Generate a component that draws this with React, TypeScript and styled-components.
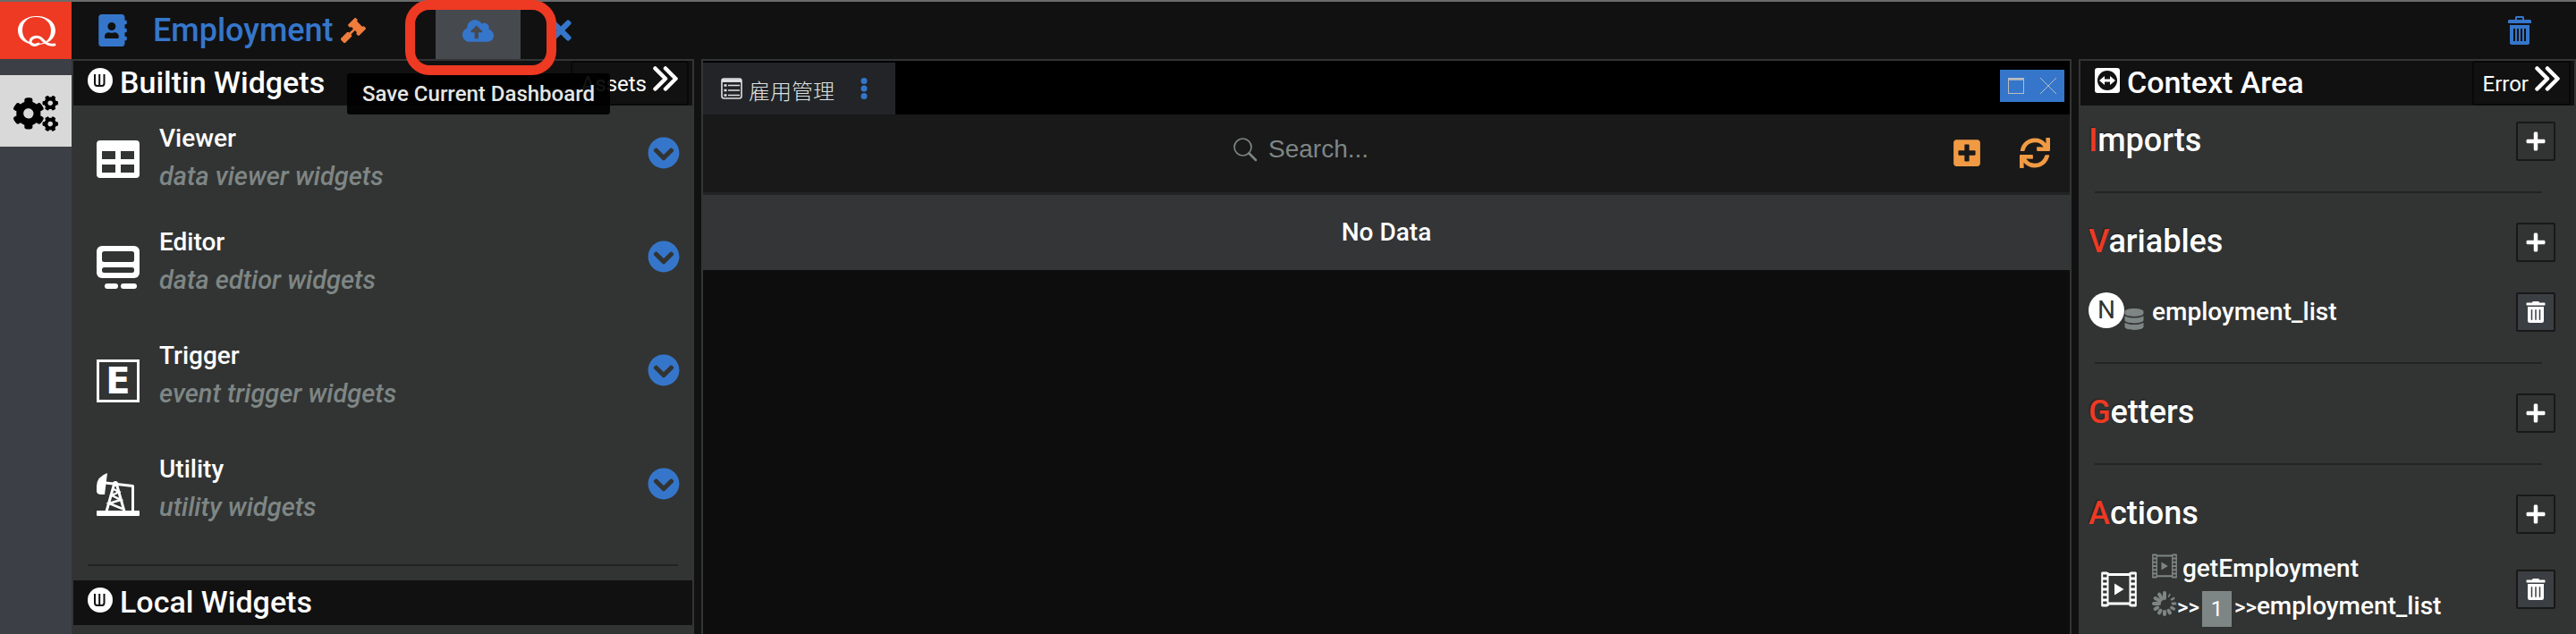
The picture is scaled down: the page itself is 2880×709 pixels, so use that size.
import React from "react";
import styled, { createGlobalStyle } from "styled-components";
import {
  FaAddressBook,
  FaChevronCircleDown,
  FaCloudUploadAlt,
  FaCogs,
  FaDatabase,
  FaGavel,
  FaPlus,
  FaPlusSquare,
  FaSync,
  FaTimes,
  FaTrashAlt,
} from "react-icons/fa";
import { ImBin } from "react-icons/im";

const color = {
  bar: "#111111",
  panel: "#323433",
  edge: "#333534",
  rail: "#3c3f45",
  blue: "#3576cb",
  red: "#ee3923",
  orange: "#f09a44",
  amber: "#f07c3c",
  muted: "#7e8685",
  white: "#ffffff",
};

const GlobalStyle = createGlobalStyle`
  *, *::before, *::after { box-sizing: border-box; }
  body {
    margin: 0;
    overflow: hidden;
    background: ${color.bar};
    color: ${color.white};
    font-family: Roboto, "Noto Sans CJK SC", sans-serif;
    font-size: 28px;
    font-weight: 500;
  }
  button {
    margin: 0;
    padding: 0;
    border: 0;
    background: none;
    color: inherit;
    font: inherit;
    cursor: pointer;
  }
  svg { display: block; flex: none; }
  h1, h2, h3, p, ul { margin: 0; padding: 0; font: inherit; list-style: none; }
`;

/* ---------- frame ---------- */

const Page = styled.div`
  display: flex;
  height: 100vh;
  border-top: 2px solid #6a6b6b;
`;

const Rail = styled.nav`
  display: flex;
  flex: none;
  flex-direction: column;
  width: 80px;
  background: ${color.rail};
`;

const LogoLink = styled.a`
  display: block;
  height: 64px;
  margin-bottom: 18px;
  background: ${color.red};
`;

const RailButton = styled.button`
  display: flex;
  align-items: center;
  justify-content: center;
  height: 80px;
  padding-top: 5px;
  background: #d9d9d9;
  color: #000;
`;

const Main = styled.div`
  display: flex;
  flex: 1;
  flex-direction: column;
  min-width: 0;
`;

const TopBar = styled.header`
  position: relative;
  z-index: 2;
  display: flex;
  flex: none;
  align-items: center;
  height: 64px;
  padding: 0 46px 0 28px;
  background: ${color.bar};
  color: ${color.blue};
`;

const PageTitle = styled.h1`
  margin: 0 8px 0 27px;
  font-size: 36px;
  font-weight: 500;
  line-height: 64px;
`;

const Gavel = styled(FaGavel)`
  color: ${color.amber};
`;

const SaveSlot = styled.div`
  position: relative;
  display: flex;
  align-self: stretch;
  margin-right: 28px;
`;

const TitleGroup = styled.div`
  display: flex;
  align-items: center;
  width: 379px;
`;

const SaveButton = styled.button`
  display: flex;
  align-items: center;
  justify-content: center;
  width: 95px;
  background: #46494e;
  color: ${color.blue};
`;

const Highlight = styled.div`
  position: absolute;
  top: -2px;
  left: -34px;
  z-index: 2;
  width: 169px;
  height: 84px;
  border: 11px solid ${color.red};
  border-radius: 27px;
  pointer-events: none;
`;

const Tooltip = styled.div`
  position: absolute;
  top: 80px;
  left: -99px;
  padding: 0 17px;
  border-radius: 3px;
  background: rgba(0, 0, 0, 0.92);
  color: #e4e6e6;
  font-size: 24px;
  line-height: 46px;
  white-space: nowrap;
`;

const Spacer = styled.div`
  flex: 1;
`;

const Columns = styled.div`
  display: grid;
  flex: 1;
  grid-template-columns: minmax(0, 696fr) minmax(0, 1532fr) minmax(0, 556fr);
  gap: 8px;
  min-height: 0;
`;

const Panel = styled.section<{ $tone?: string }>`
  overflow: hidden;
  border: 2px solid ${color.edge};
  border-bottom: 0;
  background: ${(p) => p.$tone ?? color.panel};
`;

const PanelHead = styled.header`
  display: flex;
  align-items: baseline;
  gap: 8px;
  height: 50px;
  padding-left: 16px;
  background: ${color.bar};
  font-size: 34px;
  line-height: 48px;
`;

const SwitchButton = styled.button`
  display: flex;
  align-items: baseline;
  align-self: flex-start;
  gap: 7px;
  margin: 0 4px 0 auto;
  padding: 2px 10px 0;
  border: 2px solid #080808;
  border-radius: 3px;
  font-size: 24px;
  font-weight: 400;
  line-height: 44px;
`;

const Rule = styled.hr`
  height: 2px;
  margin: 16px;
  border: 0;
  background: #222423;
`;

/* ---------- widget list ---------- */

const WidgetRow = styled.li<{ $height: number }>`
  display: flex;
  align-items: flex-start;
  height: ${(p) => p.$height}px;
  padding: 15px 14px 0 26px;

  & > svg { margin-top: 26px; }
`;

const WidgetText = styled.div`
  flex: 1;
  padding: 1px 0 0 22px;
  line-height: 42px;
`;

const Hint = styled.p`
  color: ${color.muted};
  font-size: 29px;
  font-style: italic;
`;

const ExpandButton = styled.button`
  margin-top: 20px;
  color: ${color.blue};
`;

/* ---------- centre ---------- */

const TabBar = styled.div`
  display: flex;
  align-items: flex-start;
  height: 60px;
  background: #000;
`;

const Tab = styled.div`
  display: flex;
  align-items: center;
  height: 58px;
  margin: 2px auto 0 0;
  padding: 0 31px 0 20px;
  background: #222427;
  color: #dfe2e2;
  font-size: 24px;
  font-weight: 300;
`;

const TabLabel = styled.span`
  margin: 0 29px 0 7px;
  padding-top: 8px;
  line-height: 50px;
`;

const WindowButtons = styled.div`
  display: flex;
  margin: 10px 6px 0 0;
  background: ${color.blue};
  color: #b9bcbd;
`;

const WindowButton = styled.button`
  display: flex;
  align-items: center;
  justify-content: center;
  width: 36px;
  height: 36px;
`;

const Toolbar = styled.div`
  display: grid;
  grid-template-columns: 1fr 360px 1fr;
  height: 90px;
  border-bottom: 3px solid #222423;
  background: #191919;
`;

const SearchBox = styled.label`
  display: flex;
  grid-column: 2;
  align-items: center;
  height: 78px;
  padding-left: 9px;
  color: ${color.muted};
`;

const SearchInput = styled.input`
  flex: 1;
  min-width: 0;
  height: 40px;
  margin-left: 12px;
  padding: 0;
  border: 0;
  outline: 0;
  background: none;
  color: ${color.white};
  font: 400 28px "Liberation Sans", Arial, sans-serif;

  &::placeholder { color: ${color.muted}; opacity: 1; }
`;

const ToolbarActions = styled.div`
  display: flex;
  align-items: center;
  justify-content: flex-end;
  gap: 42px;
  height: 86px;
  padding-right: 22px;
  color: ${color.orange};
`;

const EmptyRow = styled.p`
  background: #333536;
  line-height: 84px;
  text-align: center;
`;

/* ---------- context area ---------- */

const Context = styled.div`
  padding: 18px 21px 0 9px;
`;

const Group = styled.section`
  display: flex;
  flex-direction: column;
  gap: 18px;

  & + & {
    margin-top: 34px;
    padding-top: 35px;
    background: linear-gradient(#222423, #222423) 7px 0 / calc(100% - 22px) 2px no-repeat;
  }
`;

const GroupHead = styled.div`
  display: flex;
  align-items: flex-start;
  justify-content: space-between;
`;

const GroupTitle = styled.h3`
  font-size: 36px;
  font-weight: 500;
  line-height: 42px;
  text-shadow: -1px -1px 1px #222423;

  &::first-letter { color: ${color.red}; }
`;

const SquareButton = styled.button<{ $filled?: boolean }>`
  display: flex;
  flex: none;
  align-items: center;
  justify-content: center;
  width: 44px;
  height: 44px;
  border: 2px solid #171817;
  border-radius: 2px;
  background: ${(p) => (p.$filled ? "#3b3e43" : "transparent")};
`;

const VariableRow = styled.div`
  display: flex;
  margin-top: 16px;
`;

const TypeBadge = styled.span`
  flex: none;
  width: 40px;
  height: 40px;
  border-radius: 50%;
  background: ${color.white};
  color: ${color.panel};
  font-weight: 400;
  line-height: 40px;
  text-align: center;
`;

const StoreIcon = styled(FaDatabase)`
  margin: 18px 0 0 -1px;
  color: ${color.muted};
`;

const RowName = styled.span`
  flex: 1;
  padding-left: 8px;
  line-height: 44px;
`;

const ActionRow = styled.div`
  display: flex;
  align-items: flex-start;
  padding-left: 14px;

  & > svg { margin-top: 24px; }
  & > button { margin-top: 22px; }
`;

const ActionLines = styled.div`
  flex: 1;
  padding-left: 17px;
`;

const ActionLine = styled.div<{ $gap?: number }>`
  display: flex;
  align-items: flex-start;
  min-height: 42px;
  line-height: 42px;

  & > svg {
    margin: 4px ${(p) => p.$gap ?? 0}px 0 0;
    color: ${color.muted};
  }
`;

const Arrows = styled.span`
  font-size: 24px;
  line-height: 44px;
`;

const Count = styled.span`
  width: 33px;
  height: 40px;
  margin: 4px 3px;
  background: ${color.muted};
  font-size: 24px;
  font-weight: 400;
  line-height: 40px;
  text-align: center;
`;

const IconFrame = styled.span`
  display: block;
  flex: none;
  width: 48px;
  height: 48px;
  margin-top: 26px;
  border: 3px solid ${color.white};
  font: 700 40px/43px "DejaVu Sans", sans-serif;
  text-align: center;
`;

/* ---------- drawings ---------- */

const Logo = () => (
  <svg width="80" height="64" viewBox="0 2 80 64" fill="none">
    <path
      fill="#fff"
      fillRule="evenodd"
      d="M41 18C52 18 62 24 62 34C62 43 54 50 41 50C29 50 20 44 20 34C20 24 30 18 41 18ZM40 19C31 19 25 25 25 34C25 43 32 49 42 49C51 49 57 43 57 34C57 25 50 19 40 19Z"
    />
    <path
      d="M43 49C38 52 34 50 34 46C35 41 42 40 46 43C50 47 53 51 61 50"
      stroke="#fff"
      strokeWidth="3"
      strokeLinecap="round"
    />
  </svg>
);

const WidgetMark = () => (
  <svg width="28" height="28" viewBox="0 0 28 28" fill="none">
    <circle cx="14" cy="14" r="14" fill="#fff" />
    <path
      d="M8 7v10q0 3 2.500 3h5.500q2.500 0 2.500 -3V7M13.200 7v13"
      stroke={color.bar}
      strokeWidth="2"
    />
  </svg>
);

const SwapMark = () => (
  <svg width="28" height="28" viewBox="0 0 28 28">
    <rect width="28" height="28" rx="3" fill="#fff" />
    <circle cx="14" cy="14" r="11" fill={color.bar} />
    <path fill="#fff" d="M5 14l6-5v3.500h6V9l6 5-6 5v-3.500h-6V19z" />
  </svg>
);

const DoubleChevron = () => (
  <svg width="28" height="28" viewBox="0 0 28 28" fill="none">
    <path
      d="M2.500 2.500L14 14L2.500 25.500M14 2.500L25.500 14L14 25.500"
      stroke="#fff"
      strokeWidth="4.500"
      strokeLinecap="round"
      strokeLinejoin="round"
    />
  </svg>
);

const TableIcon = () => (
  <svg width="48" height="48" viewBox="0 2 48 48" overflow="visible">
    <path
      fill="#fff"
      fillRule="evenodd"
      d="M4 0H44Q48 0 48 4V38Q48 42 44 42H4Q0 42 0 38V4Q0 0 4 0ZM6 12v9h15v-9zM27 12v9h15v-9zM6 27v9h15v-9zM27 27v9h15v-9z"
    />
  </svg>
);

const EditorIcon = () => (
  <svg width="48" height="48" viewBox="0 0 48 48">
    <rect width="48" height="36" rx="6" fill="#fff" />
    <rect x="6" y="6" width="36" height="12" rx="2.500" fill={color.panel} />
    <rect x="6" y="24" width="36" height="6" rx="2.500" fill={color.panel} />
    <rect x="9" y="42" width="15" height="6" rx="3" fill="#fff" />
    <rect x="27" y="42" width="18" height="6" rx="3" fill="#fff" />
  </svg>
);

const PumpIcon = () => (
  <svg width="48" height="48" viewBox="0 0 48 48" fill="none" stroke="#fff">
    <rect y="42" width="48" height="6" rx="1" fill="#fff" stroke="none" />
    <path d="M12 0Q0 4 0 15V20Q0 24 5 24H9L12 0Z" fill="#fff" stroke="none" />
    <path d="M10 11L40.500 14.500V43" strokeWidth="3" strokeLinejoin="round" />
    <path d="M20 11L11 43M22 11L31 43" strokeWidth="3" />
    <path d="M19 18L25 21L17 25L27 30L14 34L29 40" strokeWidth="2.500" />
    <circle cx="21" cy="12" r="3" fill="#fff" stroke="none" />
  </svg>
);

const ListWindowIcon = () => (
  <svg width="24" height="24" viewBox="0 0 24 24" fill="none" stroke="currentColor">
    <rect x="1" y="1" width="22" height="22" rx="2.500" strokeWidth="1.600" />
    <path d="M1 3.200h22" strokeWidth="3.500" />
    <path d="M8 8.500h13M8 14h13M8 19.500h13" strokeWidth="1.500" />
    <path d="M3.500 8.500h3M3.500 14h3M3.500 19.500h3" strokeWidth="2.600" />
  </svg>
);

const DotsIcon = () => (
  <svg width="8" height="24" viewBox="0 0 8 24" fill={color.blue}>
    <circle cx="4" cy="3.500" r="3.500" />
    <circle cx="4" cy="12" r="3.500" />
    <circle cx="4" cy="20.500" r="3.500" />
  </svg>
);

const SearchIcon = () => (
  <svg width="27" height="27" viewBox="0 0 27 27" fill="none" stroke="currentColor">
    <circle cx="10.500" cy="10.500" r="9.500" strokeWidth="1.700" />
    <path d="M17.500 17.500L25 25" strokeWidth="2.600" strokeLinecap="round" />
  </svg>
);

const FilmIcon = ({ size }: { size: number }) => (
  <svg width={size} height={size} viewBox="0 0 40 40" fill="none" stroke="currentColor">
    <path d="M1.200 1V39M7.500 1V39M32.500 1V39M38.800 1V39" strokeWidth="2" />
    <path d="M7 3.500H33M7 36H33" strokeWidth="3" />
    <path
      d="M1 2h6M1 8h6M1 14h6M1 20h6M1 26h6M1 32h6M1 38h6M33 2h6M33 8h6M33 14h6M33 20h6M33 26h6M33 32h6M33 38h6"
      strokeWidth="2.800"
    />
    <path d="M15 13.500L25.500 20L15 26.500Z" fill="currentColor" stroke="none" />
  </svg>
);

const SpinnerIcon = () => (
  <svg width="28" height="28" viewBox="0 0 28 28" stroke="currentColor" strokeLinecap="round">
    {Array.from({ length: 12 }, (_, i) => (
      <line
        key={i}
        x1="14"
        y1={i === 0 || i > 8 ? 8 : 5}
        x2="14"
        y2="2"
        strokeWidth={i === 0 ? 4 : Math.min(4, 1 + i * 0.6)}
        transform={`rotate(${i * 30} 14 14)`}
      />
    ))}
  </svg>
);

/* ---------- content ---------- */

const widgets = [
  { name: "Viewer", hint: "data viewer widgets", icon: <TableIcon />, height: 116 },
  { name: "Editor", hint: "data edtior widgets", icon: <EditorIcon />, height: 127 },
  { name: "Trigger", hint: "event trigger widgets", icon: <IconFrame aria-hidden>E</IconFrame>, height: 127 },
  { name: "Utility", hint: "utility widgets", icon: <PumpIcon />, height: 127 },
];

const ContextGroup = ({ title, children }: { title: string; children?: React.ReactNode }) => (
  <Group>
    <GroupHead>
      <GroupTitle>{title}</GroupTitle>
      <SquareButton aria-label={`Add to ${title}`}>
        <FaPlus size={24} />
      </SquareButton>
    </GroupHead>
    {children}
  </Group>
);

const DeleteButton = ({ name }: { name: string }) => (
  <SquareButton $filled aria-label={`Delete ${name}`}>
    <FaTrashAlt size={24} />
  </SquareButton>
);

export default function App() {
  return (
    <>
      <GlobalStyle />
      <Page>
        <Rail>
          <LogoLink href="#" aria-label="Home">
            <Logo />
          </LogoLink>
          <RailButton aria-label="Settings">
            <FaCogs size={50} />
          </RailButton>
        </Rail>
        <Main>
          <TopBar>
            <TitleGroup>
              <FaAddressBook size={36} />
              <PageTitle>Employment</PageTitle>
              <Gavel size={28} />
            </TitleGroup>
            <SaveSlot>
              <SaveButton aria-label="Save Current Dashboard">
                <FaCloudUploadAlt size={35} />
              </SaveButton>
              <Tooltip role="tooltip">Save Current Dashboard</Tooltip>
              <Highlight />
            </SaveSlot>
            <button aria-label="Cancel">
              <FaTimes size={34} />
            </button>
            <Spacer />
            <button aria-label="Delete dashboard">
              <ImBin size={32} />
            </button>
          </TopBar>
          <Columns>
            <Panel>
              <PanelHead>
                <WidgetMark />
                <h2>Builtin Widgets</h2>
                <SwitchButton>
                  Assets
                  <DoubleChevron />
                </SwitchButton>
              </PanelHead>
              <ul>
                {widgets.map((w) => (
                  <WidgetRow key={w.name} $height={w.height}>
                    {w.icon}
                    <WidgetText>
                      <h3>{w.name}</h3>
                      <Hint>{w.hint}</Hint>
                    </WidgetText>
                    <ExpandButton aria-label={`Expand ${w.name}`}>
                      <FaChevronCircleDown size={36} />
                    </ExpandButton>
                  </WidgetRow>
                ))}
              </ul>
              <Rule />
              <PanelHead>
                <WidgetMark />
                <h2>Local Widgets</h2>
              </PanelHead>
            </Panel>

            <Panel $tone="#0d0d0d">
              <TabBar>
                <Tab>
                  <ListWindowIcon />
                  <TabLabel>雇用管理</TabLabel>
                  <button aria-label="Tab menu">
                    <DotsIcon />
                  </button>
                </Tab>
                <WindowButtons>
                  <WindowButton aria-label="Maximize">
                    <svg width="18" height="18" viewBox="0 0 18 18" fill="none" stroke="currentColor">
                      <path d="M1 1.500H17" strokeWidth="2.500" />
                      <rect x="0.500" y="0.500" width="17" height="17" />
                    </svg>
                  </WindowButton>
                  <WindowButton aria-label="Close">
                    <svg width="18" height="18" viewBox="0 0 18 18" stroke="currentColor">
                      <path d="M0 0L18 18M18 0L0 18" />
                    </svg>
                  </WindowButton>
                </WindowButtons>
              </TabBar>
              <Toolbar>
                <SearchBox>
                  <SearchIcon />
                  <SearchInput type="search" placeholder="Search..." aria-label="Search" />
                </SearchBox>
                <ToolbarActions>
                  <button aria-label="Add row">
                    <FaPlusSquare size={34} />
                  </button>
                  <button aria-label="Refresh">
                    <FaSync size={34} />
                  </button>
                </ToolbarActions>
              </Toolbar>
              <EmptyRow>No Data</EmptyRow>
            </Panel>

            <Panel>
              <PanelHead>
                <SwapMark />
                <h2>Context Area</h2>
                <SwitchButton>
                  Error
                  <DoubleChevron />
                </SwitchButton>
              </PanelHead>
              <Context>
                <ContextGroup title="Imports" />
                <ContextGroup title="Variables">
                  <VariableRow>
                    <TypeBadge>N</TypeBadge>
                    <StoreIcon size={24} />
                    <RowName>employment_list</RowName>
                    <DeleteButton name="employment_list" />
                  </VariableRow>
                </ContextGroup>
                <ContextGroup title="Getters" />
                <ContextGroup title="Actions">
                  <ActionRow>
                    <FilmIcon size={40} />
                    <ActionLines>
                      <ActionLine $gap={6}>
                        <FilmIcon size={28} />
                        getEmployment
                      </ActionLine>
                      <ActionLine>
                        <SpinnerIcon />
                        <Arrows>&gt;&gt;</Arrows>
                        <Count>1</Count>
                        <Arrows>&gt;&gt;</Arrows>
                        employment_list
                      </ActionLine>
                      <ActionLine>
                        <FilmIcon size={28} />
                      </ActionLine>
                    </ActionLines>
                    <DeleteButton name="getEmployment" />
                  </ActionRow>
                </ContextGroup>
              </Context>
            </Panel>
          </Columns>
        </Main>
      </Page>
    </>
  );
}
